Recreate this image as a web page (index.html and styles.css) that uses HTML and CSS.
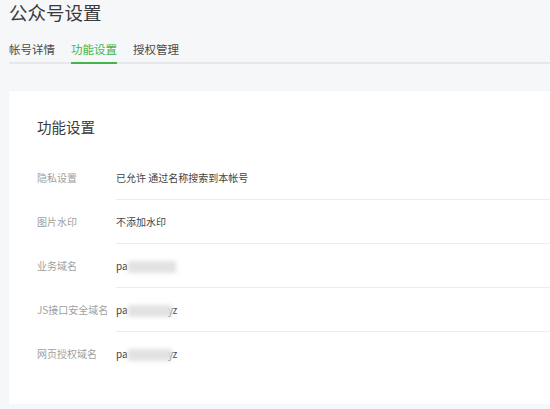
FILE: index.html
```html
<!DOCTYPE html>
<html lang="zh-CN">
<head>
<meta charset="utf-8">
<title>公众号设置</title>
<link rel="stylesheet" href="styles.css">
</head>
<body>
<div class="page">
  <h1 class="page-title">公众号设置</h1>
  <nav class="tabs">
    <a class="tab">帐号详情</a>
    <a class="tab active">功能设置</a>
    <a class="tab">授权管理</a>
  </nav>
  <section class="card">
    <h2 class="card-title">功能设置</h2>
    <div class="rows">
      <div class="row">
        <div class="label">隐私设置</div>
        <div class="value">已允许 通过名称搜索到本帐号</div>
      </div>
      <div class="row">
        <div class="label">图片水印</div>
        <div class="value">不添加水印</div>
      </div>
      <div class="row">
        <div class="label">业务域名</div>
        <div class="value">pa<span class="mask mask-long"></span><span class="faint">:</span></div>
      </div>
      <div class="row">
        <div class="label">JS接口安全域名</div>
        <div class="value">pa<span class="mask"></span>yz</div>
      </div>
      <div class="row">
        <div class="label">网页授权域名</div>
        <div class="value">pa<span class="mask"></span>yz</div>
      </div>
    </div>
  </section>
</div>
</body>
</html>
```
FILE: styles.css
```css
html, body {
  margin: 0;
  padding: 0;
  background: #f6f7f9;
  overflow: hidden;
}
body {
  font-family: "Noto Sans CJK SC", "Noto Sans", "Liberation Sans", sans-serif;
  color: #353535;
}
.page {
  padding-left: 9px;
}
.page-title {
  margin: 0;
  font-size: 18.5px;
  font-weight: 400;
  line-height: 25px;
  color: #3a3a3a;
}
.tabs {
  display: flex;
  gap: 16px;
  margin-top: 11px;
  border-bottom: 2px solid #e7e8eb;
}
.tab {
  font-size: 11.5px;
  line-height: 26px;
  color: #4a4a4a;
  padding: 0;
  border-bottom: 2px solid transparent;
  margin-bottom: -2px;
  cursor: pointer;
}
.tab.active {
  color: #44b549;
  border-bottom-color: #44b549;
}
.card {
  margin-top: 27px;
  background: #fff;
  padding: 26px 0 28px 28px;
  box-shadow: 0 0 1px rgba(0,0,0,0.04);
}
.card-title {
  margin: 0 0 19px;
  font-size: 14.5px;
  font-weight: 400;
  line-height: 20px;
  color: #3a3a3a;
}
.row {
  display: flex;
  height: 44px;
}
.label {
  width: 79px;
  flex: none;
  font-size: 10px;
  line-height: 43px;
  color: #a0a0a0;
  white-space: nowrap;
}
.value {
  flex: 1;
  font-size: 10px;
  line-height: 43px;
  color: #444;
  border-bottom: 1px solid #ececee;
  white-space: nowrap;
}
.row:last-child .value {
  border-bottom: none;
}
.mask {
  display: inline-block;
  width: 44px;
  height: 12px;
  margin-right: -4px;
  vertical-align: middle;
  background: #e2e2e2;
  filter: blur(2px);
  position: relative;
  z-index: 1;
}
.mask-long {
  width: 48px;
}
.faint {
  color: #d0d4da;
}
```
